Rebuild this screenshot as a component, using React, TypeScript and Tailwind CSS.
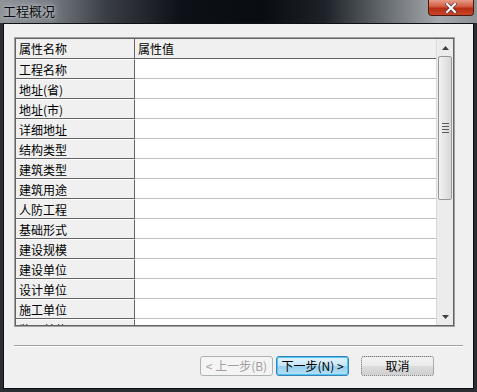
import React from "react";

const rows = [
  "工程名称",
  "地址(省)",
  "地址(市)",
  "详细地址",
  "结构类型",
  "建筑类型",
  "建筑用途",
  "人防工程",
  "基础形式",
  "建设规模",
  "建设单位",
  "设计单位",
  "施工单位",
  "监理单位",
];

const font = { fontFamily: '"SimSun","Noto Sans CJK SC",sans-serif' };

export default function App() {
  return (
    <div
      className="w-[477px] h-[392px] flex flex-col bg-[#2b2f34] text-[12px] text-black overflow-hidden"
      style={font}
    >
      {/* Title bar */}
      <div className="relative h-[23px] shrink-0 bg-[linear-gradient(90deg,#8e9498_0%,#7a8086_10%,#3a3f45_22%,#0d1117_38%,#090c11_55%,#1d2228_68%,#6d7277_82%,#a5a9ad_92%,#8c9196_100%)]">
        <span className="absolute left-[3px] top-[3px] text-[13px] leading-[16px] text-[#0a0a0a] [text-shadow:0_0_6px_#c8ccd0,0_0_3px_#c8ccd0]">
          工程概况
        </span>
        <div className="absolute left-[428px] top-0 w-[46px] h-[16px] rounded-b-[4px] border border-t-0 border-[#4a1a12] bg-[linear-gradient(180deg,#e59c88_0%,#d25a3e_45%,#b62d12_55%,#c8462a_100%)] flex items-center justify-center">
          <svg width="12" height="10" viewBox="0 0 12 10">
            <path d="M2 1 L10 9 M10 1 L2 9" stroke="#3a3f45" strokeWidth="3.2" strokeLinecap="square" />
            <path d="M2 1 L10 9 M10 1 L2 9" stroke="#ffffff" strokeWidth="2" strokeLinecap="square" />
          </svg>
        </div>
      </div>

      {/* Panel */}
      <div className="flex-1 mx-[3px] mb-[3px] border border-[#0e1013] bg-[#f0f0f0] flex flex-col">
        {/* Table box */}
        <div className="mt-[13px] ml-[10px] w-[441px] h-[290px] border border-[#a0a0a0] flex">
          <div className="flex-1 border border-[#646464] flex overflow-hidden">
            <div className="flex-1 overflow-hidden">
              <div className="flex h-[20px] border-b border-[#646464] bg-[#f0f0f0]">
                <div className="w-[119px] border-r border-[#646464] pl-[3px] leading-[19px]">属性名称</div>
                <div className="flex-1 pl-[3px] leading-[19px]">属性值</div>
              </div>
              {rows.map((r) => (
                <div key={r} className="flex h-[20px]">
                  <div className="w-[119px] border-r border-b border-[#646464] bg-[#f0f0f0] pl-[3px] leading-[19px] border-t border-t-white">
                    {r}
                  </div>
                  <div className="flex-1 bg-white border-b border-[#c0c0c0]"></div>
                </div>
              ))}
            </div>
            {/* Scrollbar */}
            <div className="w-[17px] bg-[#ececec] border-l border-[#dadada] flex flex-col">
              <div className="h-[17px] flex items-center justify-center">
                <svg width="7" height="4" viewBox="0 0 7 4">
                  <path d="M3.5 0 L7 4 L0 4 Z" fill="#404040" />
                </svg>
              </div>
              <div className="mx-[1px] h-[144px] rounded-[2px] border border-[#979797] bg-[linear-gradient(90deg,#f2f2f2,#e3e3e3_60%,#d6d6d6)] flex items-center justify-center">
                <div className="flex flex-col gap-[2px] w-[7px]">
                  <div className="h-[1px] bg-[#5a5a5a]" />
                  <div className="h-[1px] bg-[#5a5a5a]" />
                  <div className="h-[1px] bg-[#5a5a5a]" />
                  <div className="h-[1px] bg-[#5a5a5a]" />
                </div>
              </div>
              <div className="flex-1" />
              <div className="h-[17px] flex items-center justify-center">
                <svg width="7" height="4" viewBox="0 0 7 4">
                  <path d="M0 0 L7 0 L3.5 4 Z" fill="#404040" />
                </svg>
              </div>
            </div>
          </div>
        </div>

        {/* Separator */}
        <div className="mt-[18px] ml-[10px] w-[449px] border-t border-[#a0a0a0] border-b border-b-white" />

        {/* Buttons */}
        <div className="mt-[9px] flex">
          <div className="ml-[196px] w-[73px] h-[20px] rounded-[3px] border border-[#adb2b5] bg-[#f4f4f4] text-[#a0a0a0] flex items-center justify-center leading-none">
            &lt; 上一步(B)
          </div>
          <div className="ml-[3px] w-[73px] h-[20px] rounded-[3px] border border-[#3c7fb1] bg-[linear-gradient(180deg,#e5f4fc_0%,#c4e5f6_50%,#98d1ef_51%,#b6e0f6_100%)] flex items-center justify-center leading-none [box-shadow:inset_0_0_0_1px_#48c7f8]">
            下一步(N) &gt;
          </div>
          <div className="ml-[12px] w-[73px] h-[20px] rounded-[3px] border border-dotted border-[#707070] bg-[linear-gradient(180deg,#f2f2f2_0%,#ebebeb_50%,#dddddd_51%,#cfcfcf_100%)] flex items-center justify-center leading-none">
            取消
          </div>
        </div>
      </div>
    </div>
  );
}
